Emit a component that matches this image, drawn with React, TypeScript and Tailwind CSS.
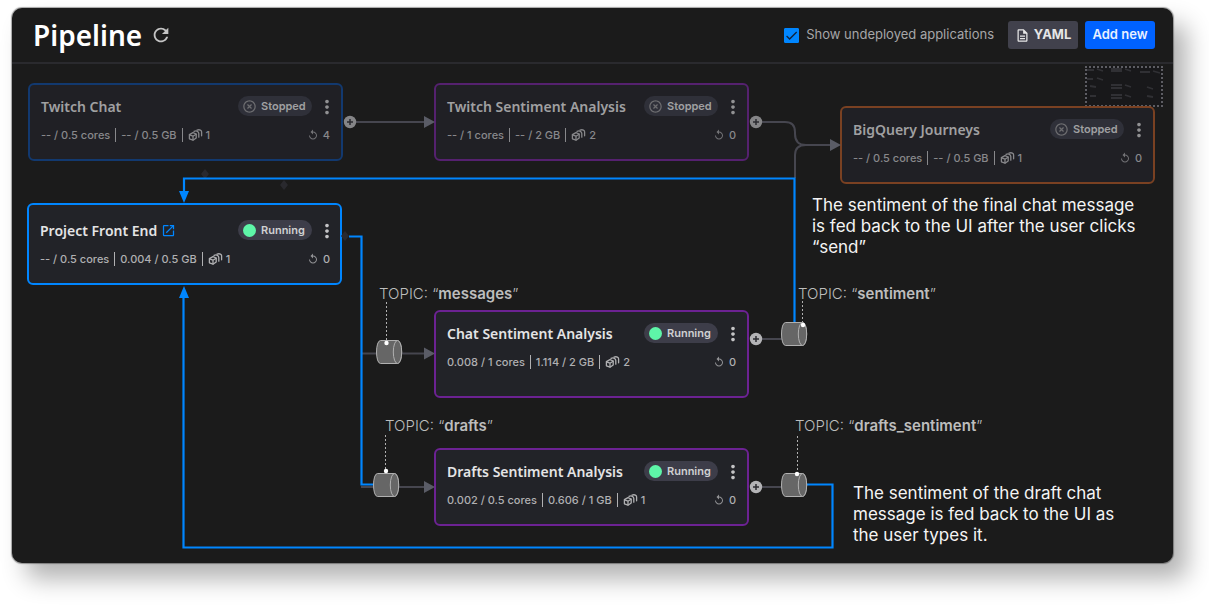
import { clsx } from "clsx";
import type { ReactNode } from "react";
import {
  MdCheck,
  MdHighlightOff,
  MdMoreVert,
  MdOpenInNew,
  MdOutlineDescription,
  MdRefresh,
  MdReplay,
} from "react-icons/md";

type Deployment = {
  name: string;
  x: number;
  y: number;
  running: boolean;
  cpu: string;
  memory: string;
  replicas: number;
  restarts: number;
  frame: string;
  link?: boolean;
};

const deployments: Deployment[] = [
  {
    name: "Twitch Chat",
    x: 16,
    y: 19,
    running: false,
    cpu: "-- / 0.5 cores",
    memory: "-- / 0.5 GB",
    replicas: 1,
    restarts: 4,
    frame: "h-[78px] px-[11px] pt-[11px] border-[#12396f]",
  },
  {
    name: "Twitch Sentiment Analysis",
    x: 422,
    y: 19,
    running: false,
    cpu: "-- / 1 cores",
    memory: "-- / 2 GB",
    replicas: 2,
    restarts: 0,
    frame: "h-[78px] px-[11px] pt-[11px] border-[#55216f]",
  },
  {
    name: "BigQuery Journeys",
    x: 828,
    y: 42,
    running: false,
    cpu: "-- / 0.5 cores",
    memory: "-- / 0.5 GB",
    replicas: 1,
    restarts: 0,
    frame: "h-[78px] px-[11px] pt-[11px] border-[#7a4122]",
  },
  {
    name: "Project Front End",
    x: 15,
    y: 139,
    running: true,
    cpu: "-- / 0.5 cores",
    memory: "0.004 / 0.5 GB",
    replicas: 1,
    restarts: 0,
    frame: "h-[82px] pt-[15px] pr-[10px] pl-[11px] border-[#0086ff]",
    link: true,
  },
  {
    name: "Chat Sentiment Analysis",
    x: 422,
    y: 246,
    running: true,
    cpu: "0.008 / 1 cores",
    memory: "1.114 / 2 GB",
    replicas: 2,
    restarts: 0,
    frame: "h-[88px] px-[11px] pt-[11px] border-[#6c2293]",
  },
  {
    name: "Drafts Sentiment Analysis",
    x: 422,
    y: 384,
    running: true,
    cpu: "0.002 / 0.5 cores",
    memory: "0.606 / 1 GB",
    replicas: 1,
    restarts: 0,
    frame: "h-[78px] px-[11px] pt-[11px] border-[#6c2293]",
  },
];

const topics = [
  { name: "messages", x: 367, y: 220 },
  { name: "sentiment", x: 786, y: 220 },
  { name: "drafts", x: 373, y: 352 },
  { name: "drafts_sentiment", x: 783, y: 352 },
];

function Cubes() {
  return (
    <svg
      className="h-3 w-[15px]"
      viewBox="0 0 15 12"
      fill="none"
      stroke="currentColor"
      strokeWidth="1.3"
      strokeLinejoin="round"
      strokeLinecap="round"
      aria-hidden="true"
    >
      <path d="M5 3.6 8.2 5v4L5 11.2 1.4 9.8V5.6z" />
      <path d="M1.6 5.8 5 7.2 8 5.2M5 7.2v3.7" />
      <path d="M6 2.3Q8 1.6 9.4 2.3T10.8 4.6V8.2" />
      <path d="M9 1.1Q11 .4 12.400 1.1T13.6 3.4V6.8" />
    </svg>
  );
}

function StatusPill({ running }: { running: boolean }) {
  return (
    <span
      className={clsx(
        "flex h-5 w-[74px] items-center gap-1 rounded-full pl-1 text-[11px] font-semibold",
        running ? "bg-[#3d3d49] text-[#d0d0d2]" : "bg-[#2f3039] text-[#a0a0a2]",
      )}
    >
      {running ? (
        <span className="mx-px h-[13px] w-[13px] rounded-full bg-[#5ef5a8]" />
      ) : (
        <MdHighlightOff className="h-[15px] w-[15px] text-[#6d6d70]" />
      )}
      {running ? "Running" : "Stopped"}
    </span>
  );
}

function DeploymentCard({ item }: { item: Deployment }) {
  return (
    <article
      style={{ left: item.x, top: item.y }}
      className={clsx(
        "absolute w-[315px] rounded-md border-2",
        item.running
          ? "bg-[#222328] text-[#b0b0b2]"
          : "bg-[#202025] text-[#88888b]",
        item.frame,
      )}
    >
      <div className="flex h-5 items-center">
        <h2
          className={clsx(
            "flex items-center gap-1 font-['Noto_Sans','Liberation_Sans',sans-serif] text-[14px] font-semibold",
            item.running ? "text-[#e4e4e5]" : "text-[#a0a0a2]",
          )}
        >
          {item.name}
          {item.link && (
            <a href="#front-end" aria-label="Open Project Front End">
              <MdOpenInNew className="h-[15px] w-[15px] text-[#0086ff]" />
            </a>
          )}
        </h2>
        <div className="ml-auto flex items-center">
          <StatusPill running={item.running} />
          <button
            type="button"
            aria-label={`${item.name} options`}
            className={clsx(
              "-mr-2 ml-1 grid h-5 w-[22px] place-items-center",
              item.running ? "text-[#c4c4c6]" : "text-[#919193]",
            )}
          >
            <MdMoreVert className="h-[22px] w-[22px]" />
          </button>
        </div>
      </div>
      <div className="mt-[9px] flex h-5 items-center text-[11px] font-medium whitespace-nowrap">
        <span>{item.cpu}</span>
        <span className="mx-[5px] h-[14px] w-px bg-current" />
        <span>{item.memory}</span>
        <span className="mx-[5px] h-[14px] w-px bg-current" />
        <Cubes />
        <span className="ml-[3px]">{item.replicas}</span>
        <span className="ml-auto flex items-center gap-1">
          <MdReplay className="h-3 w-3 opacity-80" />
          {item.restarts}
        </span>
      </div>
    </article>
  );
}

function Plus({ x, y, dim }: { x: number; y: number; dim?: boolean }) {
  return (
    <g transform={`translate(${x} ${y})`}>
      <circle r="6.2" fill={dim ? "#858587" : "#b4b4b6"} />
      <path d="M-3 0H3M0-3V3" stroke="#2b2b30" strokeWidth="1.5" />
    </g>
  );
}

function Cylinder({ x, y }: { x: number; y: number }) {
  return (
    <g
      transform={`translate(${x} ${y})`}
      fill="#666666"
      stroke="#b0b0b0"
      strokeWidth="1"
    >
      <path d="M4.5.5H21.5C27 .5 27 23.5 21.5 23.5H4.5C-.8 23.5-.8.5 4.5.5Z" />
      <ellipse cx="21.5" cy="12" rx="4.2" ry="11.5" />
    </g>
  );
}

function Connections() {
  return (
    <svg
      className="pointer-events-none absolute top-0 left-0 h-[499px] w-[1161px]"
      viewBox="0 0 1161 499"
      fill="none"
      aria-hidden="true"
    >
      <g fill="#29292e">
        <path d="m193 105 4 5-4 5-4-5zM272 116l4 5-4 5-4-5zM333 167l4 5-4 5-4-5z" />
      </g>
      <g stroke="#46464f" strokeWidth="2">
        <path d="M344 58H412M350 289.5H412M349 423H412M750 275H770M750 423H770" />
        <path d="M750 58H773Q783 58 783 68V70Q783 81 794 81H820M783 114V91Q783 81 794 81" />
      </g>
      <g fill="#5a5c66">
        <path d="m412 52 11 6-11 6zM818 75l11 6-11 6zM412 283.5l11 6-11 6zM412 417l11 6-11 6z" />
      </g>
      <g stroke="#0086ff" strokeWidth="2.2">
        <path d="M782.5 259V114.5H172V130" />
        <path d="M337 172.5H349.5V420.5H364" />
        <path d="M794 420.5H820.5V483.5H171.5V231" />
      </g>
      <g fill="#0086ff">
        <path d="M167 127h10l-5 12zM167 234h10l-5-12z" />
      </g>
      <Plus x={338} y={58} dim />
      <Plus x={744} y={58} dim />
      <Plus x={744} y={275} />
      <Plus x={744} y={423} />
      <Cylinder x={364} y={276} />
      <Cylinder x={361} y={409} />
      <Cylinder x={769} y={258} />
      <Cylinder x={769} y={409} />
      <path
        d="M374.5 238V276M373.5 371V405M790.5 237V258M785.5 372V408"
        stroke="#b0b0b0"
        strokeDasharray="2 2"
      />
      <g fill="#ffffff">
        <circle cx="374.5" cy="279" r="2.2" />
        <circle cx="374" cy="407" r="2.2" />
        <circle cx="791" cy="261" r="2.2" />
        <circle cx="785" cy="410" r="2.2" />
      </g>
    </svg>
  );
}

function Minimap() {
  return (
    <div className="absolute top-0.5 right-[10px] h-[41px] w-[78px] border-2 border-dotted border-[#5d5d63] bg-[#18181a]">
      <svg
        className="h-full w-full"
        viewBox="0 0 74 37"
        stroke="#303034"
        strokeWidth="1.8"
        aria-hidden="true"
      >
        <path d="M0 2H7M10 1l6 2M24 1H35M24 3H35M38 1l6 2M53 4H63M66 3l7 2M0 11H6M10 10l6 2M3 18l6 1M24 17H35M24 20H35M38 17l6 2M60 19l6 2M3 28h6M24 27H35M24 30H35M38 27l6 2M60 28l6 1" />
      </svg>
    </div>
  );
}

function Note({ children, className }: { children: ReactNode; className: string }) {
  return (
    <p
      className={clsx(
        "absolute text-[17px] leading-[21px] text-[#f4f4f4]",
        className,
      )}
    >
      {children}
    </p>
  );
}

function Header() {
  return (
    <header className="flex h-14 items-center border-b-2 border-[#2a2a2e] pr-[18px] pl-[21px]">
      <h1 className="font-['Noto_Sans','Liberation_Sans',sans-serif] text-[28px] font-semibold text-white">
        Pipeline
      </h1>
      <button type="button" aria-label="Refresh" className="ml-2 text-[#c4c4c4]">
        <MdRefresh className="h-[22px] w-[22px]" />
      </button>
      <div className="ml-auto flex items-center">
        <span className="relative h-[15px] w-[15px]">
          <input
            id="undeployed"
            type="checkbox"
            defaultChecked
            className="peer block h-[15px] w-[15px] appearance-none rounded-[1px] border border-[#0086ff] checked:bg-[#0086ff]"
          />
          <MdCheck className="pointer-events-none absolute inset-0 hidden h-[15px] w-[15px] text-[#10233c] peer-checked:block" />
        </span>
        <label htmlFor="undeployed" className="ml-[7px] text-[13px] text-[#a6a6a8]">
          Show undeployed applications
        </label>
        <button
          type="button"
          className="ml-[14px] flex h-7 w-[70px] items-center justify-center gap-1 rounded-[3px] bg-[#41414c] text-[13px] font-bold text-[#e6e6e6]"
        >
          <MdOutlineDescription className="h-[15px] w-[15px]" />
          YAML
        </button>
        <button
          type="button"
          className="ml-[7px] h-7 w-[70px] rounded-[3px] bg-[#0062ff] text-[13px] font-semibold text-[#e8f0ff]"
        >
          Add new
        </button>
      </div>
    </header>
  );
}

export default function App() {
  return (
    <div className="bg-white pt-2 pr-9 pb-[50px] pl-3 font-[Inter,'Liberation_Sans',sans-serif]">
      <main className="rounded-[10px] bg-[#1b1b1b] shadow-[0_0_1px_1px_rgba(0,0,0,0.35),14px_16px_24px_rgba(0,0,0,0.3)]">
        <Header />
        <section aria-label="Pipeline canvas" className="relative min-h-[499px]">
          <Minimap />
          {deployments.map((item) => (
            <DeploymentCard key={item.name} item={item} />
          ))}
          <Connections />
          {topics.map((topic) => (
            <p
              key={topic.name}
              style={{ left: topic.x, top: topic.y }}
              className="absolute text-[15px] leading-5 font-light whitespace-nowrap text-[#bdbdbd]"
            >
              TOPIC: “<strong className="font-semibold">{topic.name}</strong>”
            </p>
          ))}
          <Note className="top-[131px] left-[800px] w-[338px]">
            The sentiment of the final chat message is fed back to the UI after
            the user clicks “send”
          </Note>
          <Note className="top-[419px] left-[841px] w-[280px]">
            The sentiment of the draft chat message is fed back to the UI as the
            user types it.
          </Note>
        </section>
      </main>
    </div>
  );
}
